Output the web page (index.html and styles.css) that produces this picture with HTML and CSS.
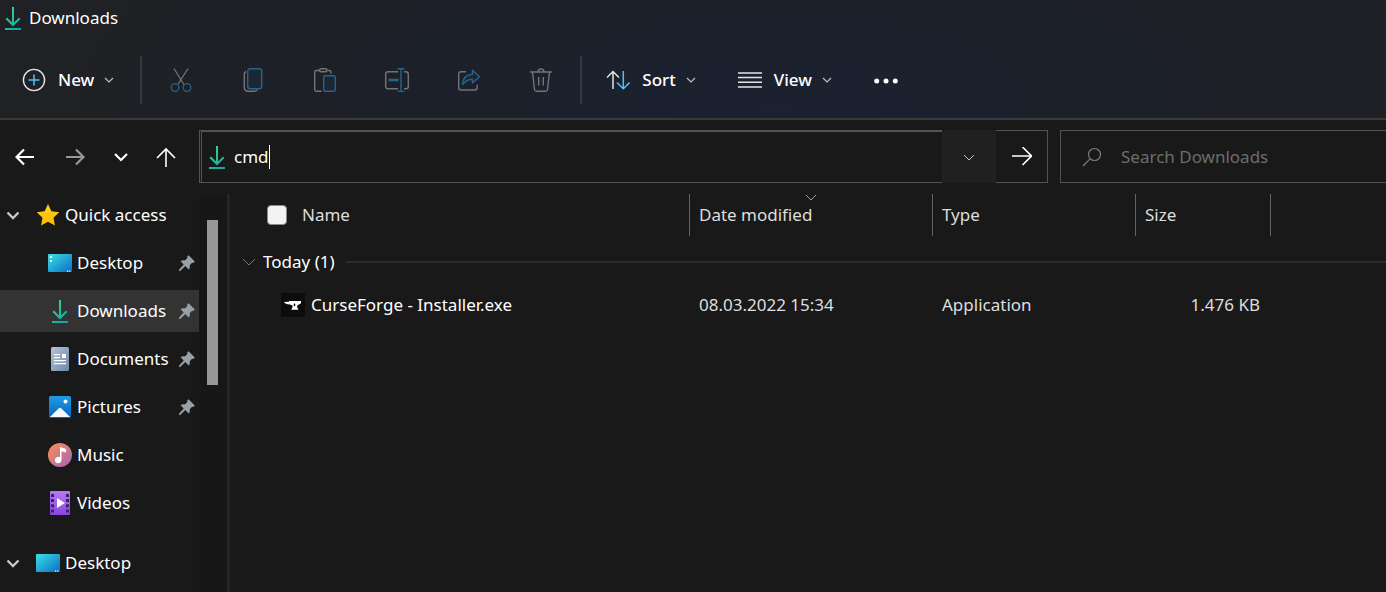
FILE: index.html
```
<!DOCTYPE html>
<html lang="en">
<head>
    <meta charset="UTF-8">
    <meta name="viewport" content="width=device-width, initial-scale=1.0">
    <title>Downloads</title>
    <link rel="stylesheet" href="styles.css">
</head>
<body>

    <!-- shared icons -->
    <svg class="sprite" width="0" height="0" aria-hidden="true">
        <defs>
            <linearGradient id="green" gradientUnits="userSpaceOnUse" x1="4" y1="2" x2="20" y2="22">
                <stop offset="0" stop-color="#3ddc84"/>
                <stop offset="1" stop-color="#12a5a8"/>
            </linearGradient>
            <linearGradient id="screen" x1="0" y1="0" x2="1" y2="1">
                <stop offset="0" stop-color="#3be0e8"/>
                <stop offset="1" stop-color="#0b6cc4"/>
            </linearGradient>
            <linearGradient id="paper" x1="0" y1="0" x2="1" y2="1">
                <stop offset="0" stop-color="#b4c5d8"/>
                <stop offset="1" stop-color="#6d87a6"/>
            </linearGradient>
            <linearGradient id="photo" x1="0" y1="0" x2="0" y2="1">
                <stop offset="0" stop-color="#1f9de8"/>
                <stop offset="1" stop-color="#0663b8"/>
            </linearGradient>
            <linearGradient id="disc" x1="0" y1="0" x2="1" y2="1">
                <stop offset="0.1" stop-color="#f58b5c"/>
                <stop offset="1" stop-color="#a065ba"/>
            </linearGradient>
            <linearGradient id="film" x1="0" y1="0" x2="0" y2="1">
                <stop offset="0" stop-color="#b57af5"/>
                <stop offset="1" stop-color="#8a45e0"/>
            </linearGradient>
            <linearGradient id="gold" x1="0" y1="0" x2="0" y2="1">
                <stop offset="0" stop-color="#ffd020"/>
                <stop offset="1" stop-color="#ffb900"/>
            </linearGradient>
        </defs>
        <symbol id="i-download" viewBox="0 0 24 24">
            <path d="M12 1v18M5.300 12.300L12 19l6.700-6.700" fill="none" stroke="url(#green)" stroke-width="2"/>
            <path d="M4 22h16v2H4z" fill="url(#green)"/>
        </symbol>
        <symbol id="i-chevron" viewBox="0 0 10 10">
            <path d="M1 3l4 4 4-4" fill="none" stroke="currentColor" stroke-width="1.100"/>
        </symbol>
        <symbol id="i-desktop" viewBox="0 0 24 24">
            <rect y="3" width="24" height="18" rx="1" fill="url(#screen)"/>
            <path d="M19 19.500h1.200v1.200H19zM21.200 19.500h1.200v1.200h-1.200z" fill="#fff"/>
        </symbol>
        <symbol id="i-pin" viewBox="0 0 16 16">
            <path d="M9.600.300l6.100 6.100-1.300 1.500-1.300-.2-2.400 2.600c.4 2-.1 3.300-1 4.200L6.300 11.100 1.200 16 0 15.800l.1-1.200 4.600-5L1.600 6.300c1-1 2.500-1.300 4.300-.9L8.400 3 8.200 1.600z" fill="#98a1a8"/>
        </symbol>
    </svg>

    <header class="top">
        <div class="titlebar">
            <svg class="icon"><use href="#i-download"/></svg>
            <h1>Downloads</h1>
        </div>

        <div class="toolbar">
            <button class="tool">
                <svg class="icon" viewBox="0 0 24 24" fill="none">
                    <circle cx="12" cy="12" r="10.600" stroke="#e4e4e4" stroke-width="1.400"/>
                    <path d="M12 6.500v11M6.500 12h11" stroke="#4cc2ff" stroke-width="1.500"/>
                </svg>
                <span>New</span>
                <svg class="chevron"><use href="#i-chevron"/></svg>
            </button>
            <div class="actions">
                <button class="action" disabled aria-label="Cut">
                    <svg class="icon" viewBox="0 0 24 24" fill="none" stroke-width="1.300">
                        <path d="M5 .5l9.800 16M19 .5L9.200 16" stroke="#727479"/>
                        <circle cx="6" cy="19.500" r="3.800" stroke="#27648a"/>
                        <circle cx="18" cy="19.500" r="3.800" stroke="#27648a"/>
                    </svg>
                </button>
                <button class="action" disabled aria-label="Copy">
                    <svg class="icon" viewBox="0 0 24 24" fill="none" stroke-width="1.400">
                        <path d="M5 3.500q-1.700.8-1.700 2.700v13q0 4 4 4h6.500q1.800 0 2.600-1.700" stroke="#727479"/>
                        <rect x="6.700" y=".7" width="14" height="20" rx="2.500" stroke="#27648a" fill="#1c2733"/>
                    </svg>
                </button>
                <button class="action" disabled aria-label="Paste">
                    <svg class="icon" viewBox="0 0 24 24" fill="none" stroke-width="1.400">
                        <path d="M6.500 2.500H3.300q-1.600 0-1.600 1.600v17.500q0 1.600 1.600 1.600h5.200M14.500 2.500h1.800q1.600 0 1.600 1.600v1.600" stroke="#727479"/>
                        <rect x="6.500" y=".7" width="7.500" height="3" rx="1.500" stroke="#727479"/>
                        <rect x="10.700" y="7.700" width="11.600" height="15.600" rx="1.500" stroke="#27648a" fill="#1c2733"/>
                    </svg>
                </button>
                <button class="action" disabled aria-label="Rename">
                    <svg class="icon" viewBox="0 0 24 24" fill="none" stroke-width="1.400">
                        <path d="M13 3.700H3q-2.300 0-2.300 2.300v12.500q0 2.300 2.300 2.300h10M19 3.700h2q2.300 0 2.300 2.300v12.500q0 2.300-2.300 2.300h-2" stroke="#727479"/>
                        <path d="M12.500.700h7M12.500 23.500h7M16 .700v22.800" stroke="#27648a"/>
                        <path d="M3.500 12h10" stroke="#27648a" stroke-width="2.600"/>
                    </svg>
                </button>
                <button class="action" disabled aria-label="Share">
                    <svg class="icon" viewBox="0 0 24 24" fill="none" stroke-width="1.400" stroke-linejoin="round">
                        <path d="M9 3.700H4.200q-2.500 0-2.500 2.500v13.300q0 2.500 2.500 2.500h13.500q2.500 0 2.500-2.500v-2.700" stroke="#727479"/>
                        <path d="M15.500 2.300l7 6.400-7 6.400v-3.600q-5.500-.5-10 5 .5-9.500 10-10.200z" stroke="#27648a" fill="#1c2733"/>
                    </svg>
                </button>
                <button class="action" disabled aria-label="Delete">
                    <svg class="icon" viewBox="0 0 24 24" fill="none" stroke="#727479" stroke-width="1.400">
                        <path d="M1 4h22M9 4q0-3 3-3t3 3M3.500 4l2 17.500q.2 1.800 2 1.800h9q1.800 0 2-1.800l2-17.500M9.700 9v8.500M14.300 9v8.500"/>
                    </svg>
                </button>
            </div>
            <button class="tool">
                <svg class="icon" viewBox="0 0 24 24" fill="none" stroke-width="1.500">
                    <path d="M7 21V3.500M1 9.500l6-6 6 6" stroke="#e4e4e4"/>
                    <path d="M17.300 3v17.500M11 14.500l6.300 6.300 6.300-6.300" stroke="#4cc2ff"/>
                </svg>
                <span>Sort</span>
                <svg class="chevron"><use href="#i-chevron"/></svg>
            </button>
            <button class="tool">
                <svg class="icon" viewBox="0 0 24 24" fill="none" stroke="#e4e4e4" stroke-width="1.400">
                    <path d="M0 5h24M0 9.500h24M0 14.300h24M0 19h24"/>
                </svg>
                <span>View</span>
                <svg class="chevron"><use href="#i-chevron"/></svg>
            </button>
            <button class="tool" aria-label="See more">
                <svg class="icon" viewBox="0 0 24 24" fill="#fff">
                    <circle cx="2.700" cy="13" r="2.500"/>
                    <circle cx="12" cy="13" r="2.500"/>
                    <circle cx="21.300" cy="13" r="2.500"/>
                </svg>
            </button>
        </div>
    </header>

    <div class="navbar">
        <nav class="history">
            <button aria-label="Back">
                <svg class="nav-icon" viewBox="0 0 20 20"><path d="M19 10H2M9 2.500L1.500 10 9 17.500"/></svg>
            </button>
            <button class="dim" aria-label="Forward">
                <svg class="nav-icon" viewBox="0 0 20 20"><path d="M1 10h17M11 2.500l7.500 7.500-7.500 7.500"/></svg>
            </button>
            <button class="recent" aria-label="Recent locations">
                <svg class="nav-icon" viewBox="0 0 20 20"><path d="M4 7l6 6 6-6"/></svg>
            </button>
            <button aria-label="Up">
                <svg class="nav-icon thin" viewBox="0 0 20 20"><path d="M10 20V2M1 11l9-9 9 9"/></svg>
            </button>
        </nav>

        <form class="address">
            <label class="address-field">
                <svg class="icon"><use href="#i-download"/></svg>
                <span class="typed">
                    <input type="text" value="cmd" size="3" aria-label="Address">
                </span>
            </label>
            <button type="button" class="address-drop" aria-label="Previous locations">
                <svg viewBox="0 0 12 12"><path d="M1 4l5 5 5-5"/></svg>
            </button>
            <button type="button" class="address-go" aria-label="Go">
                <svg class="nav-icon thin" viewBox="0 0 20 20"><path d="M0 9h19M10.500 0l9 9-9 9"/></svg>
            </button>
        </form>

        <label class="search">
            <svg viewBox="0 0 20 20"><circle cx="12.500" cy="7.500" r="6"/><path d="M8.300 11.700L1 19"/></svg>
            <input type="search" placeholder="Search Downloads" aria-label="Search Downloads">
        </label>
    </div>

    <div class="content">
        <aside class="sidebar">
            <ul class="tree">
                <li>
                    <a href="#" class="node root">
                        <svg class="twist" viewBox="0 0 14 14"><path d="M1.500 4.500L7 10l5.500-5.500"/></svg>
                        <svg class="icon" viewBox="0 0 24 24"><path d="M12 1l3.400 7.200 7.800 1-5.700 5.500 1.400 7.900-6.900-3.800-6.900 3.800 1.400-7.900L.8 9.200l7.800-1z" fill="url(#gold)"/></svg>
                        <span>Quick access</span>
                    </a>
                    <ul>
                        <li><a href="#" class="node">
                            <svg class="icon" viewBox="0 0 24 24">
                                <use href="#i-desktop"/>
                                <path d="M2 5h2v2H2zM2 9h2v2H2z" fill="#fff"/>
                            </svg>
                            <span>Desktop</span>
                            <svg class="pin"><use href="#i-pin"/></svg>
                        </a></li>
                        <li><a href="#" class="node selected">
                            <svg class="icon"><use href="#i-download"/></svg>
                            <span>Downloads</span>
                            <svg class="pin"><use href="#i-pin"/></svg>
                        </a></li>
                        <li><a href="#" class="node">
                            <svg class="icon" viewBox="0 0 24 24">
                                <rect x="3" width="18" height="24" rx="1.500" fill="url(#paper)"/>
                                <path d="M6 7h6v1.300H6zM6 10h6v1.300H6zM14 7h4v4h-4zM6 13h12v1.300H6zM6 16h12v1.300H6z" fill="#fff"/>
                            </svg>
                            <span>Documents</span>
                            <svg class="pin"><use href="#i-pin"/></svg>
                        </a></li>
                        <li><a href="#" class="node">
                            <svg class="icon" viewBox="0 0 24 24">
                                <rect x="1" y="1" width="22" height="22" rx="1.500" fill="url(#photo)"/>
                                <circle cx="17.500" cy="6.500" r="2" fill="#fff"/>
                                <path d="M2 22l8.800-8.700q1.200-1 2.400 0L22 22z" fill="#f3f9ff"/>
                            </svg>
                            <span>Pictures</span>
                            <svg class="pin"><use href="#i-pin"/></svg>
                        </a></li>
                        <li><a href="#" class="node">
                            <svg class="icon" viewBox="0 0 24 24">
                                <circle cx="12" cy="12" r="12" fill="url(#disc)"/>
                                <path d="M12 4l6 2v3.500l-4.500-1.300v8.800a3.300 3.300 0 1 1-1.500-2.700z" fill="#fff"/>
                            </svg>
                            <span>Music</span>
                        </a></li>
                        <li><a href="#" class="node">
                            <svg class="icon" viewBox="0 0 24 24">
                                <rect x="2" width="20" height="24" rx="1" fill="url(#film)"/>
                                <path d="M3 3h3v3H3zM3 8h3v3H3zM3 13.300h3v3H3zM3 18.500h3v3H3zM18 3h3v3h-3zM18 8h3v3h-3zM18 13.300h3v3h-3zM18 18.500h3v3h-3z" fill="#3b2266"/>
                                <path d="M9 7l8 5-8 5z" fill="#fff"/>
                            </svg>
                            <span>Videos</span>
                        </a></li>
                    </ul>
                </li>
                <li>
                    <a href="#" class="node root">
                        <svg class="twist" viewBox="0 0 14 14"><path d="M1.500 4.500L7 10l5.500-5.500"/></svg>
                        <svg class="icon"><use href="#i-desktop"/></svg>
                        <span>Desktop</span>
                    </a>
                </li>
            </ul>
            <div class="scrollbar"><div class="thumb"></div></div>
        </aside>

        <main class="files">
            <table>
                <colgroup>
                    <col class="col-name">
                    <col class="col-date">
                    <col class="col-type">
                    <col class="col-size">
                    <col>
                </colgroup>
                <thead>
                    <tr>
                        <th>
                            <label class="select-all"><input type="checkbox"> Name</label>
                        </th>
                        <th class="sorted">
                            Date modified
                            <svg viewBox="0 0 12 8"><path d="M1 1l5 5 5-5"/></svg>
                        </th>
                        <th>Type</th>
                        <th>Size</th>
                        <td></td>
                    </tr>
                </thead>
                <tbody>
                    <tr class="group">
                        <td colspan="5">
                            <div class="group-title">
                                <svg viewBox="0 0 14 14"><path d="M1 4l6 6 6-6"/></svg>
                                <span>Today (1)</span>
                            </div>
                        </td>
                    </tr>
                    <tr class="file">
                        <td>
                            <div class="file-name">
                                <svg class="icon" viewBox="0 0 24 24">
                                    <rect width="24" height="24" fill="#0c0c0c"/>
                                    <path d="M3 9l5-.2V8h12v2.200l-3.800 2.300v1.800l1.300 2.500h-7.300l1.300-2.500v-1.800L9 11.500Q4 11 3 9z" fill="#fff"/>
                                    <path d="M13.500 10l1 2-1 1.500-1-1.500z" fill="#0c0c0c"/>
                                </svg>
                                <span>CurseForge - Installer.exe</span>
                            </div>
                        </td>
                        <td>08.03.2022 15:34</td>
                        <td>Application</td>
                        <td class="size">1.476 KB</td>
                        <td></td>
                    </tr>
                </tbody>
            </table>
        </main>
    </div>

</body>
</html>
```
FILE: styles.css
```
* {
    box-sizing: border-box;
}
body {
    margin: 0;
    min-height: 100vh;
    display: flex;
    flex-direction: column;
    overflow: hidden;
    background-color: #191919;
    color: #fff;
    font-family: "Noto Sans", "Open Sans", sans-serif;
    font-size: 17px;
    line-height: 24px;
}
button, input {
    font: inherit;
    color: inherit;
    background: none;
    border: none;
    padding: 0;
    margin: 0;
    outline: none;
}
button {
    display: flex;
    align-items: center;
    justify-content: center;
}
svg {
    display: block;
    flex: none;
}
.sprite {
    position: absolute;
}
.icon {
    width: 24px;
    height: 24px;
}

/* title and command bar */
.top {
    border-bottom: 2px solid #3a3a3a;
    background: radial-gradient(ellipse 720px 300px at 56% 100%, #1b2131, #1d2028 60%, #202124);
}
.titlebar {
    display: flex;
    align-items: center;
    gap: 4px;
    height: 36px;
    padding-left: 1px;
}
.titlebar h1 {
    margin: 0;
    font-size: 17px;
    font-weight: 400;
}
.toolbar {
    display: flex;
    align-items: center;
    height: 82px;
    padding: 6px 0 0 22px;
}
.tool {
    gap: 12px;
    margin-right: 42px;
    font-weight: 500;
}
.chevron {
    width: 10px;
    height: 10px;
    margin-left: -2px;
    color: #c4c4c4;
}
.actions {
    display: flex;
    align-items: center;
    height: 48px;
    margin: 0 24px 0 -16px;
    padding: 0 3px;
    border-left: 2px solid #34363b;
    border-right: 2px solid #34363b;
}
.action {
    width: 72px;
    height: 48px;
}

/* navigation row */
.navbar {
    display: flex;
    align-items: center;
    height: 74px;
    padding-bottom: 1px;
}
.history {
    display: flex;
    width: 199px;
    padding-right: 8px;
}
.history button {
    flex: 1;
}
.history .recent {
    flex: none;
    width: 40px;
}
.nav-icon {
    width: 20px;
    height: 20px;
    fill: none;
    stroke: #fff;
    stroke-width: 2.2;
}
.thin {
    stroke-width: 1.6;
}
.dim .nav-icon {
    stroke: #989898;
}
.address {
    display: flex;
    flex: 1;
    height: 53px;
    margin-right: 12px;
}
.address-field {
    display: flex;
    flex: 1;
    align-items: center;
    gap: 5px;
    padding-left: 3px;
    border: 1px solid #535353;
    border-top-width: 2px;
    border-left: 3px double #535353;
    border-right: none;
}
.typed {
    border-right: 1px solid #fff;
}
.typed input {
    display: block;
    width: 35px;
}
.address-drop {
    width: 54px;
    background-color: #202020;
}
.address-drop svg {
    width: 12px;
    height: 12px;
    fill: none;
    stroke: #c4c4c4;
}
.address-go {
    width: 52px;
    border: 1px solid #535353;
    border-left: none;
}
.search {
    display: flex;
    align-items: center;
    gap: 19px;
    width: 326px;
    height: 53px;
    padding-left: 21px;
    border: 1px solid #535353;
    border-right: none;
}
.search svg {
    width: 20px;
    height: 20px;
    fill: none;
    stroke: #7d7d7d;
    stroke-width: 1.2;
}
.search input {
    flex: 1;
    min-width: 0;
}
.search input::placeholder {
    color: #6d6d6d;
    opacity: 1;
}

/* folder tree */
.content {
    display: flex;
    flex: 1;
}
.sidebar {
    display: flex;
    width: 230px;
    border-right: 3px solid #252525;
}
.tree {
    flex: 1;
}
.tree, .tree ul {
    margin: 0;
    padding: 0;
    list-style: none;
}
.tree > li {
    margin-bottom: 18px;
}
.node {
    display: flex;
    align-items: center;
    gap: 5px;
    height: 42px;
    margin-bottom: 6px;
    padding: 0 4px 0 48px;
    color: #fff;
    text-decoration: none;
}
.root {
    padding-left: 6px;
}
.selected {
    background-color: #333;
}
.twist {
    width: 14px;
    height: 14px;
    margin-right: 11px;
    fill: none;
    stroke: #c8c8c8;
    stroke-width: 2.4;
}
.pin {
    width: 16px;
    height: 16px;
    margin-left: auto;
}
.scrollbar {
    width: 28px;
    padding: 26px 9px 0 8px;
    background-color: #171717;
}
.thumb {
    height: 165px;
    background-color: #979797;
}

/* file list */
.files {
    flex: 1;
    min-width: 0;
}
table {
    width: 100%;
    table-layout: fixed;
    border-collapse: separate;
    border-spacing: 0;
}
.col-name {
    width: 460px;
}
.col-date {
    width: 243px;
}
.col-type {
    width: 203px;
}
.col-size {
    width: 135px;
}
th, td {
    padding: 0 9px;
    font-weight: 400;
    text-align: left;
    color: #dedede;
}
th {
    position: relative;
    height: 42px;
    border-right: 1px solid #636363;
}
.select-all {
    display: flex;
    align-items: center;
    gap: 15px;
    padding-left: 28px;
}
.select-all input {
    appearance: none;
    width: 20px;
    height: 20px;
    border: 1px solid #8a8a8a;
    border-radius: 4px;
    background-color: #f3f3f3;
}
.sorted svg {
    position: absolute;
    top: 0;
    left: calc(50% - 6px);
    width: 12px;
    height: 8px;
    fill: none;
    stroke: #a0a0a0;
}
.group td {
    height: 52px;
    padding: 0 0 0 12px;
}
.group-title {
    display: flex;
    align-items: center;
    gap: 7px;
    color: #fff;
}
.group-title svg {
    width: 14px;
    height: 14px;
    fill: none;
    stroke: #757575;
}
.group-title::after {
    content: "";
    flex: 1;
    height: 2px;
    margin-left: 4px;
    background-color: #2b2b2b;
}
.file td {
    height: 34px;
}
.file-name {
    display: flex;
    align-items: center;
    gap: 6px;
    padding-left: 42px;
    color: #fff;
}
.file .size {
    padding-right: 11px;
    text-align: right;
}
```
